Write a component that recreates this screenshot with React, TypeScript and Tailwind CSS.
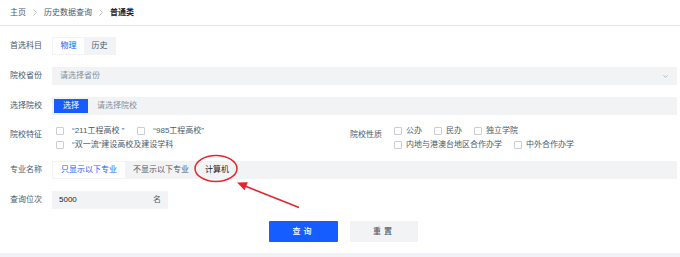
import { ChevronDown } from 'lucide-react';

const font = "font-['Liberation_Sans','Noto_Sans_CJK_SC',sans-serif]";

function Crumb({ children, current }: { children: string; current?: boolean }) {
  return <span className={current ? 'font-semibold text-[#1d2129]' : 'text-[#4e5969]'}>{children}</span>;
}

function Sep() {
  return (
    <svg width="4" height="7" viewBox="0 0 4 7" className="mx-[7px]">
      <polyline points="0.5,0.5 3.5,3.5 0.5,6.5" fill="none" stroke="#a9aeb8" strokeWidth="0.8" />
    </svg>
  );
}

function Label({ children, className = '' }: { children: string; className?: string }) {
  return <div className={`w-[42px] shrink-0 text-[#4e5969] ${className}`}>{children}</div>;
}

function Check({ text, gap = 'gap-[4px]' }: { text: string; gap?: string }) {
  return (
    <span className={`flex items-center whitespace-pre ${gap}`}>
      <span className="h-[8px] w-[8px] rounded-[1px] border border-[#c9cdd4] bg-white" />
      <span>{text}</span>
    </span>
  );
}

function Segmented({ items, active }: { items: string[]; active: number }) {
  return (
    <div className="flex h-[18px] items-stretch bg-[#f2f3f5] p-[1px]">
      {items.map((item, i) => (
        <span
          key={item}
          className={[
            'flex items-center px-[7.5px]',
            i === active ? 'bg-white text-[#165dff]' : 'text-[#4e5969]',
          ].join(' ')}
        >
          {item}
        </span>
      ))}
    </div>
  );
}

export default function App() {
  return (
    <div className={`relative h-[257px] w-full overflow-hidden bg-white text-[8px] leading-[14px] ${font}`}>
      <div className="flex h-[26px] items-center border-b border-[#e5e6eb] px-[10px]">
        <Crumb>主页</Crumb>
        <Sep />
        <Crumb>历史数据查询</Crumb>
        <Sep />
        <Crumb current>普通类</Crumb>
      </div>

      <div className="pl-[10px] pr-[3px]">
        <div className="mt-[11px] flex h-[18px] items-center">
          <Label>首选科目</Label>
          <Segmented items={['物理', '历史']} active={0} />
        </div>

        <div className="mt-[12px] flex h-[18px] items-center">
          <Label>院校省份</Label>
          <div className="flex h-full flex-1 items-center justify-between bg-[#f2f3f5] pl-[8px] pr-[8px] text-[#86909c]">
            <span>请选择省份</span>
            <ChevronDown size={7} strokeWidth={2} className="text-[#86909c]" />
          </div>
        </div>

        <div className="mt-[12px] flex h-[18px] items-center">
          <Label>选择院校</Label>
          <div className="flex h-full flex-1 items-center bg-[#f2f3f5] p-[2px]">
            <span className="flex h-full items-center bg-[#165dff] px-[9px] text-white">选择</span>
            <span className="ml-[9px] text-[#86909c]">请选择院校</span>
          </div>
        </div>

        <div className="mt-[9px] flex h-[28px] text-[#4e5969]">
          <div className="flex w-[340px] shrink-0">
            <Label className="mt-[4px]">院校特征</Label>
            <div className="ml-[4px] flex flex-col">
              <div className="flex h-[14px] items-center gap-x-[13px]">
                <Check gap="gap-[8px]" text="“211工程高校 ”" />
                <Check gap="gap-[8px]" text="“985工程高校”" />
              </div>
              <div className="flex h-[14px] items-center">
                <Check gap="gap-[8px]" text="“双一流”建设高校及建设学科" />
              </div>
            </div>
          </div>
          <div className="flex">
            <Label className="mt-[4px] w-[44px]">院校性质</Label>
            <div className="flex flex-col">
              <div className="flex h-[14px] items-center gap-x-[12px]">
                <Check text="公办" />
                <Check text="民办" />
                <Check text="独立学院" />
              </div>
              <div className="flex h-[14px] items-center gap-x-[12px]">
                <Check text="内地与港澳台地区合作办学" />
                <Check text="中外合作办学" />
              </div>
            </div>
          </div>
        </div>

        <div className="mt-[9px] flex h-[18px] items-center">
          <Label>专业名称</Label>
          <div className="flex h-full flex-1 items-stretch bg-[#f2f3f5] p-[1px]">
            <span className="flex items-center bg-white px-[8px] text-[#165dff]">只显示以下专业</span>
            <span className="flex items-center px-[8px] text-[#4e5969]">不显示以下专业</span>
            <span className="flex items-center px-[8px] text-[#1d2129]">计算机</span>
          </div>
        </div>

        <div className="mt-[12px] flex h-[18px] items-center">
          <Label>查询位次</Label>
          <div className="flex h-full w-[116px] items-center justify-between bg-[#f2f3f5] pl-[7px] pr-[7px]">
            <span className="text-[#1d2129]">5000</span>
            <span className="text-[#4e5969]">名</span>
          </div>
        </div>

        <div className="mt-[12px] flex h-[21px] justify-center gap-[12px]">
          <button type="button" className="w-[69px] rounded-[1px] bg-[#165dff] font-medium tracking-[3px] text-white">
            查询
          </button>
          <button type="button" className="w-[68px] bg-[#f2f3f5] font-medium tracking-[3px] text-[#4e5969]">
            重置
          </button>
        </div>
      </div>

      <div className="mt-[11px] h-[4px] bg-[#f0f2f7]" />

      <svg className="pointer-events-none absolute left-0 top-0" width="680" height="257">
        <ellipse cx="216" cy="168.5" rx="21" ry="13" fill="none" stroke="#e3262b" strokeWidth="1.5" />
        <line x1="299" y1="207.5" x2="245" y2="186" stroke="#e3262b" strokeWidth="1.6" />
        <polygon points="237,182.5 247.8,182.3 244.6,190.2" fill="#e3262b" />
      </svg>
    </div>
  );
}
